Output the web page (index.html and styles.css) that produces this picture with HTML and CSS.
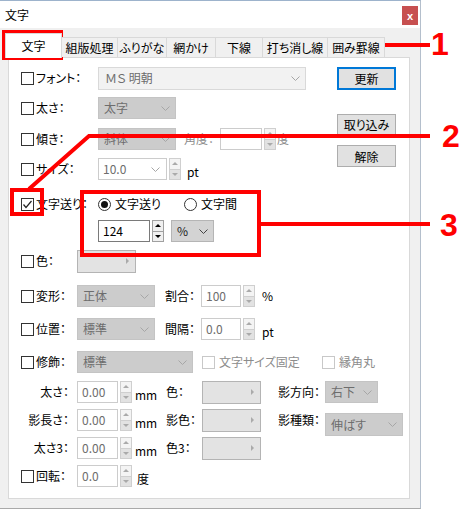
FILE: index.html
```html
<!DOCTYPE html>
<html lang="ja">
<head>
    <meta charset="UTF-8">
    <meta name="viewport" content="width=device-width, initial-scale=1.0">
    <title>文字</title>
    <link rel="stylesheet" href="styles.css">
</head>
<body>
    <div class="dialog">
        <div class="titlebar">
            <span>文字</span>
            <span class="close">x</span>
        </div>
        <div class="body">
            <div class="tabs">
                <div class="tab active">文字</div>
                <div class="tab t2">組版処理</div>
                <div class="tab t3">ふりがな</div>
                <div class="tab t4">網かけ</div>
                <div class="tab t5">下線</div>
                <div class="tab t6">打ち消し線</div>
                <div class="tab t7">囲み罫線</div>
            </div>
            <div class="panel">
                <div class="top">
                    <div class="left">
                        <div class="row">
                            <label class="cl wide"><span class="cb"></span>フォント：</label>
                            <div class="sel light w208"><span>ＭＳ 明朝</span><svg class="chev" width="9" height="5" viewBox="0 0 9 5"><polyline points="0.5,0.5 4.5,4.5 8.5,0.5"/></svg></div>
                        </div>
                        <div class="row mt6">
                            <label class="cl wide"><span class="cb"></span>太さ：</label>
                            <div class="sel w78"><span>太字</span><svg class="chev" width="9" height="5" viewBox="0 0 9 5"><polyline points="0.5,0.5 4.5,4.5 8.5,0.5"/></svg></div>
                        </div>
                        <div class="row mt7">
                            <label class="cl wide"><span class="cb"></span>傾き：</label>
                            <div class="sel w78"><span>斜体</span><svg class="chev" width="9" height="5" viewBox="0 0 9 5"><polyline points="0.5,0.5 4.5,4.5 8.5,0.5"/></svg></div>
                            <span class="lab dis ml8">角度：</span>
                            <div class="inp w42"></div>
                            <div class="spin"><span class="up"></span><span class="down"></span></div>
                            <span class="unit dis ml1">度</span>
                        </div>
                        <div class="row mt6">
                            <label class="cl wide"><span class="cb"></span>サイズ：</label>
                            <div class="inp combo w69"><span>10.0</span><svg class="chev" width="9" height="5" viewBox="0 0 9 5"><polyline points="0.5,0.5 4.5,4.5 8.5,0.5"/></svg></div>
                            <div class="spin"><span class="up"></span><span class="down"></span></div>
                            <span class="unit low ml6">pt</span>
                        </div>
                    </div>
                    <div class="buttons">
                        <button class="btn def">更新</button>
                        <button class="btn take">取り込み</button>
                        <button class="btn clear">解除</button>
                    </div>
                </div>

                <div class="row mt11">
                    <label class="cl wide"><span class="cb"><svg width="11" height="11" viewBox="0 0 11 11"><polyline points="1.5,5.5 4,8.5 9.5,2"/></svg></span>文字送り：</label>
                    <label class="opt first"><span class="radio on"></span>文字送り</label>
                    <label class="opt"><span class="radio"></span>文字間</label>
                </div>
                <div class="row mt3 indent">
                    <div class="inp on w52">124</div>
                    <div class="spin on ml1"><span class="up"></span><span class="down"></span></div>
                    <div class="sel pct w43 ml7"><span>%</span><svg class="chev" width="9" height="5" viewBox="0 0 9 5"><polyline points="0.5,0.5 4.5,4.5 8.5,0.5"/></svg></div>
                </div>
                <div class="row mt6">
                    <label class="cl narrow"><span class="cb"></span>色：</label>
                    <div class="cbtn"></div>
                </div>
                <div class="row mt11">
                    <label class="cl narrow"><span class="cb"></span>変形：</label>
                    <div class="sel w78"><span>正体</span><svg class="chev" width="9" height="5" viewBox="0 0 9 5"><polyline points="0.5,0.5 4.5,4.5 8.5,0.5"/></svg></div>
                    <span class="lab ml10">割合：</span>
                    <div class="inp w40">100</div>
                    <div class="spin"><span class="up"></span><span class="down"></span></div>
                    <span class="unit ml7">%</span>
                </div>
                <div class="row mt9">
                    <label class="cl narrow"><span class="cb"></span>位置：</label>
                    <div class="sel w78"><span>標準</span><svg class="chev" width="9" height="5" viewBox="0 0 9 5"><polyline points="0.5,0.5 4.5,4.5 8.5,0.5"/></svg></div>
                    <span class="lab ml10">間隔：</span>
                    <div class="inp w40">0.0</div>
                    <div class="spin"><span class="up"></span><span class="down"></span></div>
                    <span class="unit low ml7">pt</span>
                </div>
                <div class="row mt9">
                    <label class="cl narrow"><span class="cb"></span>修飾：</label>
                    <div class="sel w116"><span>標準</span><svg class="chev" width="9" height="5" viewBox="0 0 9 5"><polyline points="0.5,0.5 4.5,4.5 8.5,0.5"/></svg></div>
                    <label class="opt fixed dis"><span class="cb off"></span>文字サイズ固定</label>
                    <label class="opt dis"><span class="cb off"></span>縁角丸</label>
                </div>
                <div class="row mt6">
                    <span class="sub">太さ：</span>
                    <div class="inp w41">0.00</div>
                    <div class="spin"><span class="up"></span><span class="down"></span></div>
                    <span class="unit low mm">mm</span>
                    <span class="lab">色：</span>
                    <div class="cbtn"></div>
                    <span class="lab wide ml17">影方向：</span>
                    <div class="sel w53"><span>右下</span><svg class="chev" width="9" height="5" viewBox="0 0 9 5"><polyline points="0.5,0.5 4.5,4.5 8.5,0.5"/></svg></div>
                </div>
                <div class="row mt4">
                    <span class="sub">影長さ：</span>
                    <div class="inp w41">0.00</div>
                    <div class="spin"><span class="up"></span><span class="down"></span></div>
                    <span class="unit low mm">mm</span>
                    <span class="lab">影色：</span>
                    <div class="cbtn"></div>
                    <span class="lab wide ml17">影種類：</span>
                    <div class="sel w78 drop"><span>伸ばす</span><svg class="chev" width="9" height="5" viewBox="0 0 9 5"><polyline points="0.5,0.5 4.5,4.5 8.5,0.5"/></svg></div>
                </div>
                <div class="row mt4">
                    <span class="sub">太さ3：</span>
                    <div class="inp w41">0.00</div>
                    <div class="spin"><span class="up"></span><span class="down"></span></div>
                    <span class="unit low mm">mm</span>
                    <span class="lab">色3：</span>
                    <div class="cbtn"></div>
                </div>
                <div class="row mt4">
                    <label class="cl narrow"><span class="cb"></span>回転：</label>
                    <div class="inp w41">0.0</div>
                    <div class="spin"><span class="up"></span><span class="down"></span></div>
                    <span class="unit low ml5">度</span>
                </div>
            </div>
        </div>
    </div>

    <svg class="marks" width="471" height="510" viewBox="0 0 471 510">
        <rect x="4" y="32" width="57" height="26"/>
        <line x1="61" y1="45" x2="430" y2="45"/>
        <rect x="12" y="190" width="30" height="24"/>
        <polyline points="29,189 89,136 430,136"/>
        <rect x="82" y="192" width="177" height="63"/>
        <line x1="259" y1="224" x2="430" y2="224"/>
    </svg>
    <span class="num n1">1</span>
    <span class="num n2">2</span>
    <span class="num n3">3</span>
</body>
</html>
```

FILE: styles.css
```css
* {
    margin: 0;
    padding: 0;
    box-sizing: border-box;
}
body {
    width: 471px;
    height: 510px;
    position: relative;
    overflow: hidden;
    background: #fff;
    font-family: "Noto Sans CJK JP", "Noto Sans", sans-serif;
    font-size: 12px;
    line-height: 16px;
    color: #000;
    font-feature-settings: "palt";
}
.dialog {
    width: 421px;
    height: 509px;
    background: #f0f0f0;
    border-top: 1px solid #9db3cc;
    border-right: 1px solid #b4bfcc;
    border-bottom: 1px solid #a9a9a9;
}
.titlebar {
    height: 27px;
    background: #fff;
    display: flex;
    align-items: center;
    justify-content: space-between;
    padding: 0 2px 0 5px;
}
.close {
    width: 16px;
    height: 19px;
    margin-top: 2px;
    background: #c75050;
    color: #fff;
    font-family: "Liberation Sans", sans-serif;
    font-weight: 700;
    font-size: 11px;
    display: flex;
    align-items: center;
    justify-content: center;
}
.body {
    padding: 0 10px 0 8px;
}

/* tabs */
.tabs {
    display: flex;
    align-items: flex-end;
    height: 30px;
    margin-left: -3px;
    margin-bottom: -1px;
    position: relative;
    z-index: 1;
}
.tab {
    height: 20px;
    margin-bottom: 1px;
    margin-left: -1px;
    border: 1px solid #d9d9d9;
    border-bottom: none;
    background: #f0f0f0;
    display: flex;
    align-items: center;
    justify-content: center;
    white-space: nowrap;
}
.tab.active {
    height: 25px;
    width: 57px;
    margin: 0;
    background: #fff;
    position: relative;
    z-index: 2;
}
.t2 { width: 57px; }
.t3 { width: 50px; }
.t4 { width: 50px; }
.t5 { width: 48px; }
.t6 { width: 66px; }
.t7 { width: 58px; }

.panel {
    height: 442px;
    background: #fff;
    border: 1px solid #d9d9d9;
    padding: 8px 0 0 12px;
}
.top {
    display: flex;
}
.left {
    flex: 1;
}
.buttons {
    width: 59px;
    margin-right: 13px;
    display: flex;
    flex-direction: column;
}
.btn {
    height: 21px;
    border: 1px solid #adadad;
    background: #e1e1e1;
    font-family: "Noto Sans CJK JP", sans-serif;
    font-size: 12px;
    font-feature-settings: "palt";
    color: #000;
}
.btn.def {
    height: 23px;
    margin-top: 1px;
    border: 2px solid #0078d7;
}
.btn.take { margin-top: 24px; }
.btn.clear { margin-top: 10px; height: 22px; }

/* rows */
.row {
    display: flex;
    align-items: center;
    height: 24px;
    white-space: nowrap;
}
.indent { margin-left: 77px; }
.mt3 { margin-top: 3px; }
.mt4 { margin-top: 4px; }
.mt6 { margin-top: 6px; }
.mt7 { margin-top: 7px; }
.mt9 { margin-top: 9px; }
.mt11 { margin-top: 11px; }
.ml1 { margin-left: 1px; }
.ml5 { margin-left: 5px; }
.ml6 { margin-left: 6px; }
.ml7 { margin-left: 7px; }
.ml8 { margin-left: 8px; }
.ml10 { margin-left: 10px; }
.ml17 { margin-left: 17px; }

.cl {
    display: flex;
    align-items: center;
    gap: 2px;
    flex: none;
}
.cl.wide { width: 77px; }
.cl.narrow { width: 56px; }
.cb {
    width: 13px;
    height: 13px;
    border: 1px solid #333;
    background: #fff;
    flex: none;
    display: flex;
    align-items: center;
    justify-content: center;
}
.cb svg polyline {
    fill: none;
    stroke: #222;
    stroke-width: 1.2;
}
.cb.off { border-color: #c8c8c8; }

.opt {
    display: flex;
    align-items: center;
    gap: 4px;
}
.opt.first { width: 86px; }
.opt.fixed { width: 120px; margin-left: 9px; }
.dis { color: #8c8c8c; }
.radio {
    width: 13px;
    height: 13px;
    border: 1px solid #333;
    border-radius: 50%;
    background: #fff;
    display: flex;
    align-items: center;
    justify-content: center;
}
.radio.on::after {
    content: "";
    width: 7px;
    height: 7px;
    border-radius: 50%;
    background: #111;
}

/* selects */
.sel {
    height: 22px;
    flex: none;
    display: flex;
    align-items: center;
    justify-content: space-between;
    padding: 0 5px 0 5px;
    background: #cccccc;
    border: 1px solid #c4c4c4;
    color: #6d6d6d;
}
.sel.light {
    height: 23px;
    background: #f2f2f2;
    border-color: #d9d9d9;
    padding-left: 6px;
}
.sel.pct {
    background: #d3d3d3;
    border-color: #b5b5b5;
    color: #222;
}
.sel.drop {
    align-self: flex-start;
    margin-top: 5px;
    height: 23px;
}
.chev polyline {
    fill: none;
    stroke: #a6a6a6;
    stroke-width: 1;
}
.pct .chev polyline { stroke: #444; }
.w208 { width: 208px; }
.w78 { width: 78px; }
.w116 { width: 116px; }
.w53 { width: 53px; }
.w43 { width: 43px; }

/* inputs */
.inp {
    height: 22px;
    flex: none;
    display: flex;
    align-items: center;
    border: 1px solid #cccccc;
    background: #fff;
    color: #6d6d6d;
    padding: 0 4px;
}
.inp.combo { justify-content: space-between; padding-right: 6px; }
.inp.on { border-color: #7a7a7a; color: #000; }
.w40 { width: 40px; }
.w41 { width: 41px; }
.w42 { width: 42px; }
.w52 { width: 52px; }
.w69 { width: 69px; }

.spin {
    width: 12px;
    height: 22px;
    margin-left: 2px;
    flex: none;
    display: flex;
    flex-direction: column;
}
.spin span {
    flex: 1;
    border: 1px solid #cfcfcf;
    background: #f4f4f4;
    display: flex;
    align-items: center;
    justify-content: center;
}
.spin .down {
    background: #e2e2e2;
    border-top: none;
}
.spin .up::after,
.spin .down::after {
    content: "";
    border-left: 3px solid transparent;
    border-right: 3px solid transparent;
}
.spin .up::after { border-bottom: 3px solid #aaa; }
.spin .down::after { border-top: 3px solid #aaa; }
.spin.on span { border-color: #a0a0a0; background: #f0f0f0; }
.spin.on .up::after { border-bottom-color: #000; }
.spin.on .down::after { border-top-color: #000; }

.cbtn {
    width: 59px;
    height: 23px;
    flex: none;
    border: 1px solid #b4b4b4;
    background: #e3e3e3;
    display: flex;
    align-items: center;
    justify-content: flex-end;
    padding-right: 6px;
}
.cbtn::after {
    content: "";
    border-top: 3px solid transparent;
    border-bottom: 3px solid transparent;
    border-left: 3px solid #aaa;
}

.lab {
    width: 36px;
    flex: none;
}
.lab.wide { width: 47px; }
.unit.low {
    align-self: flex-end;
    margin-bottom: 1px;
}
.unit.mm {
    width: 34px;
    padding-left: 3px;
    margin-left: 0;
}
.sub {
    width: 56px;
    flex: none;
    text-align: right;
    padding-right: 8px;
}

/* annotations */
.marks {
    position: absolute;
    left: 0;
    top: 0;
}
.marks rect,
.marks line,
.marks polyline {
    fill: none;
    stroke: #ff0000;
    stroke-width: 4;
}
.num {
    position: absolute;
    font-family: "Liberation Sans", Arial, sans-serif;
    font-weight: 700;
    font-size: 32px;
    line-height: 32px;
    color: #ff0000;
    font-feature-settings: normal;
}
.n1 { left: 431px; top: 28px; }
.n2 { left: 442px; top: 120px; }
.n3 { left: 440px; top: 209px; }
```
